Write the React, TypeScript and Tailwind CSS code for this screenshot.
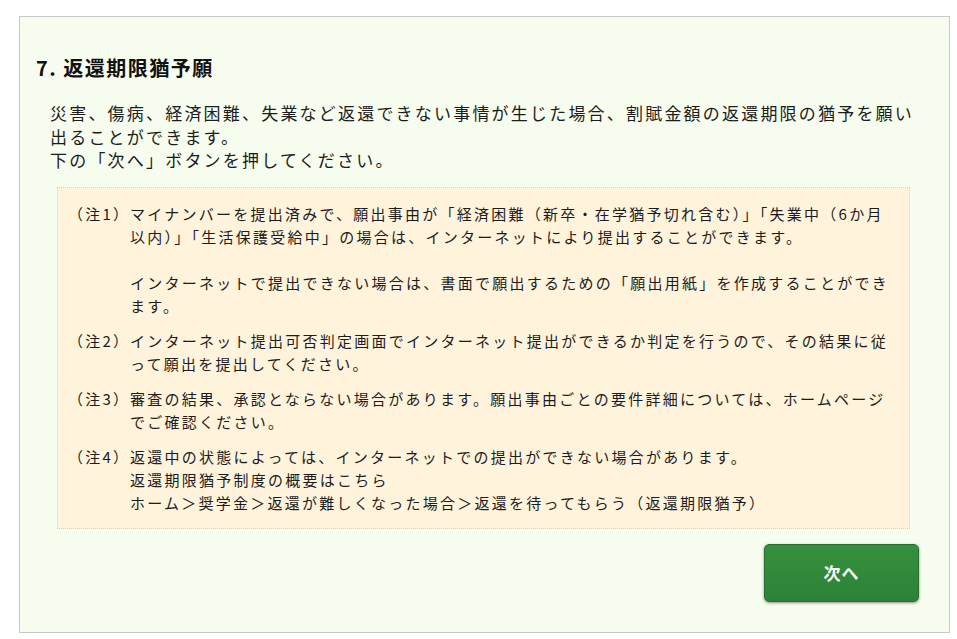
import React from 'react'

const notes = [
  {
    label: '（注1）',
    lines: [
      'マイナンバーを提出済みで、願出事由が「経済困難（新卒・在学猶予切れ含む）」「失業中（6か月以内）」「生活保護受給中」の場合は、インターネットにより提出することができます。',
      '',
      'インターネットで提出できない場合は、書面で願出するための「願出用紙」を作成することができます。',
    ],
  },
  {
    label: '（注2）',
    lines: ['インターネット提出可否判定画面でインターネット提出ができるか判定を行うので、その結果に従って願出を提出してください。'],
  },
  {
    label: '（注3）',
    lines: ['審査の結果、承認とならない場合があります。願出事由ごとの要件詳細については、ホームページでご確認ください。'],
  },
  {
    label: '（注4）',
    lines: [
      '返還中の状態によっては、インターネットでの提出ができない場合があります。',
      '返還期限猶予制度の概要はこちら',
      'ホーム＞奨学金＞返還が難しくなった場合＞返還を待ってもらう（返還期限猶予）',
    ],
  },
]

export default function App() {
  return (
    <div
      className="min-h-screen bg-white pl-[19px] pt-4 text-[#1c1c1c]"
      style={{ fontFamily: '"Noto Sans CJK JP", "Noto Sans", sans-serif' }}
    >
      <div className="flex h-[617px] w-[931px] flex-col border border-[#c8c8c8] bg-[#f7fdee] pl-4 pr-[30px] pt-[37px]">
        <h2 className="text-[20px] font-bold leading-7 tracking-[1.5px] text-[#111]">7. 返還期限猶予願</h2>

        <div className="mt-[19px] pl-[14px] text-[17px] leading-[23.5px] tracking-[2.2px]">
          <p>災害、傷病、経済困難、失業など返還できない事情が生じた場合、割賦金額の返還期限の猶予を願い出ることができます。</p>
          <p>下の「次へ」ボタンを押してください。</p>
        </div>

        <div className="ml-[21px] mr-[9px] mt-[15px] border border-dotted border-[#d8d0c0] bg-[#fff3dc] pb-[14px] pl-[10px] pr-[12px] pt-[14px] text-[15px] leading-[23px] tracking-[2.25px]">
          <div className="flex flex-col gap-3">
            {notes.map((n) => (
              <div key={n.label} className="flex">
                <div className="w-[62px] shrink-0 whitespace-nowrap">{n.label}</div>
                <div className="flex-1">
                  {n.lines.map((l, i) => (
                    <p key={i} className="min-h-[23px]">{l}</p>
                  ))}
                </div>
              </div>
            ))}
          </div>
        </div>

        <div className="mt-[15px] flex justify-end">
          <button className="h-[58px] w-[155px] rounded-[5px] border border-[#276f2e] bg-gradient-to-b from-[#36903f] to-[#2d8236] text-[17px] font-bold tracking-[1px] text-white shadow-[0_1px_3px_rgba(0,0,0,0.45)]">
            次へ
          </button>
        </div>
      </div>
    </div>
  )
}
